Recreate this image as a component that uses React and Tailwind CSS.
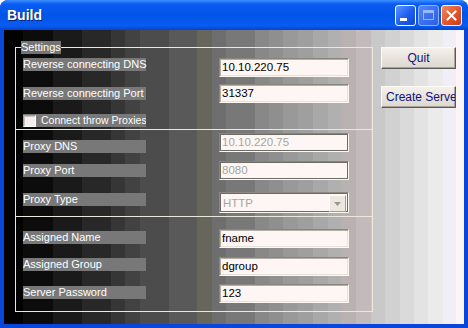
import React from "react";

const Label = ({ children, className = "" }) => (
  <div
    className={`w-[123px] shrink-0 h-[13px] bg-[#787878] text-white text-[11px] leading-[13px] whitespace-nowrap ${className}`}
  >
    {children}
  </div>
);

const TextBox = ({ value, disabled }) => (
  <div
    className={`ml-auto mr-[23px] w-[130px] h-[19px] border border-t-[#85857b] border-l-[#85857b] border-b-[#fdf9f1] border-r-[#fdf9f1] ${
      disabled
        ? "shadow-[inset_1px_1px_0_#6c6c64,inset_-1px_-1px_0_#6c6c64]"
        : "shadow-[inset_1px_1px_0_#b4b0a8,inset_-1px_-1px_0_#e6e2da]"
    } bg-[#fef6f4] pl-[2px] text-[11.5px] leading-[17px] ${
      disabled ? "text-[#a6a69c]" : "text-black"
    }`}
  >
    {value}
  </div>
);

const Separator = ({ className = "" }) => (
  <div className={`h-px bg-[#ebe7da] ${className}`} />
);

export default function App() {
  return (
    <div className="w-[468px] h-[328px] flex flex-col rounded-t-[8px] overflow-hidden bg-[#0a46dc] font-['Liberation_Sans',Arial,sans-serif]">
      {/* title bar */}
      <div className="h-[30px] flex items-center bg-[linear-gradient(to_bottom,#3d8fff_0px,#0a5cf2_4px,#0054e6_50%,#0a5cf0_85%,#0045d2_100%)]">
        <div className="ml-[7px] text-white font-bold text-[14px] [text-shadow:1px_1px_0_#0a1e78]">
          Build
        </div>
        <div className="ml-auto mr-[6px] flex gap-[2px]">
          <div className="w-[21px] h-[21px] rounded-[3px] border border-white bg-[linear-gradient(135deg,#5a96ff,#1e5cf0_55%,#0f48d8)] flex items-end pl-[4px] pb-[4px]">
            <div className="w-[7px] h-[3px] bg-white" />
          </div>
          <div className="w-[21px] h-[21px] rounded-[3px] border border-[#8fb0f6] bg-[linear-gradient(135deg,#5488f4,#3a6ef0_55%,#2e60e4)] flex items-center justify-center">
            <div className="w-[11px] h-[10px] border border-[#9ab8f8] border-t-[3px]" />
          </div>
          <div className="w-[21px] h-[21px] rounded-[3px] border border-white bg-[linear-gradient(135deg,#f08a62,#e0542e_55%,#c8401c)] flex items-center justify-center">
            <svg width="11" height="11" viewBox="0 0 11 11">
              <path d="M1.5 1.5 L9.5 9.5 M9.5 1.5 L1.5 9.5" stroke="white" strokeWidth="2" strokeLinecap="square" />
            </svg>
          </div>
        </div>
      </div>

      {/* client area */}
      <div className="mx-[4px] mb-[4px] flex-1 flex pl-[11px] bg-[linear-gradient(90deg,#020202_19px,#0c0c0c_19px,#0c0c0c_49px,#1a1a1a_49px,#1a1a1a_78px,#282828_78px,#282828_107px,#363636_107px,#363636_121px,#424242_121px,#424242_136px,#4c4c4c_136px,#4c4c4c_165px,#595959_165px,#595959_193px,#66665a_193px,#66665a_208px,#6e6e6e_208px,#6e6e6e_222px,#787878_222px,#787878_251px,#888888_251px,#888888_265px,#8f8f8f_265px,#8f8f8f_279px,#999999_279px,#999999_294px,#9f9f9f_294px,#9f9f9f_309px,#a8a8a8_309px,#a8a8a8_324px,#b0b0b0_324px,#b0b0b0_337px,#bab2b2_337px,#bab2b2_352px,#c3bbbb_352px,#c3bbbb_367px,#c9c9c9_367px,#c9c9c9_381px,#d1d1d1_381px,#d1d1d1_396px,#dadada_396px,#dadada_410px,#e3e3e3_410px,#e3e3e3_424px,#ebebeb_424px,#ebebeb_439px,#f2eef8_439px,#f2eef8_452px,#fdf5f5_452px)]">
        <fieldset className="mt-[11px] w-[358px] h-[271px] border border-[#ebe7da] m-0 p-0">
          <legend className="ml-[5px] h-[13px] bg-[#747474] text-white text-[11px] leading-[13px] px-0">
            Settings
          </legend>

          <div className="flex flex-col">
            <div className="mt-[4px] flex h-[19px] pl-[7px]">
              <Label>Reverse connecting DNS</Label>
              <TextBox value="10.10.220.75" />
            </div>
            <div className="mt-[7px] flex h-[19px] pl-[7px]">
              <Label className="mt-[3px]">Reverse connecting Port</Label>
              <TextBox value="31337" />
            </div>
            <div className="mt-[11px] pl-[7px]">
              <div className="w-[123px] h-[13px] bg-[#787878] flex items-center overflow-hidden">
                <div className="w-[13px] h-[12px] shrink-0 border border-t-[#a0a0a0] border-l-[#a0a0a0] border-b-white border-r-white bg-[#f6eeee] shadow-[inset_1px_1px_0_#c8c4c0]" />
                <span className="ml-[5px] text-white text-[10.5px] leading-[13px] whitespace-nowrap">
                  Connect throw Proxies
                </span>
              </div>
            </div>

            <Separator className="mt-[2px]" />

            <div className="mt-[3px] flex h-[19px] pl-[7px]">
              <Label className="mt-[7px]">Proxy DNS</Label>
              <TextBox value="10.10.220.75" disabled />
            </div>
            <div className="mt-[9px] flex h-[19px] pl-[7px]">
              <Label className="mt-[3px]">Proxy Port</Label>
              <TextBox value="8080" disabled />
            </div>
            <div className="mt-[12px] flex h-[21px] pl-[7px]">
              <Label className="mt-[1px]">Proxy Type</Label>
              <div className="ml-auto mr-[23px] w-[130px] h-[21px] flex border border-t-[#8a8a80] border-l-[#8a8a80] border-b-[#fdf9f1] border-r-[#fdf9f1] shadow-[inset_1px_1px_0_#6c6c64,inset_-1px_-1px_0_#6c6c64] bg-[#fef6f4] p-[1px]">
                <div className="flex-1 pl-[2px] text-[11.5px] leading-[19px] text-[#a6a69c]">
                  HTTP
                </div>
                <div className="w-[17px] h-[17px] mt-[1px] mr-[1px] bg-[#ece8e0] border border-t-[#fffdf8] border-l-[#fffdf8] border-b-[#a09c94] border-r-[#a09c94] flex items-center justify-center">
                  <svg width="7" height="4" viewBox="0 0 7 4">
                    <path d="M0 0 H7 L3.5 4 Z" fill="#9a968c" />
                  </svg>
                </div>
              </div>
            </div>

            <Separator className="mt-[3px]" />

            <div className="mt-[12px] flex h-[19px] pl-[7px]">
              <Label className="mt-[2px]">Assigned Name</Label>
              <TextBox value="fname" />
            </div>
            <div className="mt-[9px] flex h-[19px] pl-[7px]">
              <Label className="mt-[1px]">Assigned Group</Label>
              <TextBox value="dgroup" />
            </div>
            <div className="mt-[8px] flex h-[19px] pl-[7px]">
              <Label className="mt-[2px]">Server Password</Label>
              <TextBox value="123" />
            </div>
          </div>
        </fieldset>

        <div className="ml-[8px] mt-[17px] flex flex-col gap-[17px]">
          <button className="w-[75px] h-[22px] border border-t-[#fffaf2] border-l-[#fffaf2] border-b-[#5a5a54] border-r-[#5a5a54] bg-[linear-gradient(to_bottom,#f4f0ea,#dcd8d0)] shadow-[inset_-1px_-1px_0_#a8a49c] text-[#10107a] text-[12px] leading-[20px] text-center">
            Quit
          </button>
          <button className="w-[75px] h-[22px] border border-t-[#fffaf2] border-l-[#fffaf2] border-b-[#5a5a54] border-r-[#5a5a54] bg-[linear-gradient(to_bottom,#f4f0ea,#dcd8d0)] shadow-[inset_-1px_-1px_0_#a8a49c] text-[#10107a] text-[12px] leading-[20px] text-left pl-[4px] overflow-hidden whitespace-nowrap">
            Create Server
          </button>
        </div>
      </div>
    </div>
  );
}
